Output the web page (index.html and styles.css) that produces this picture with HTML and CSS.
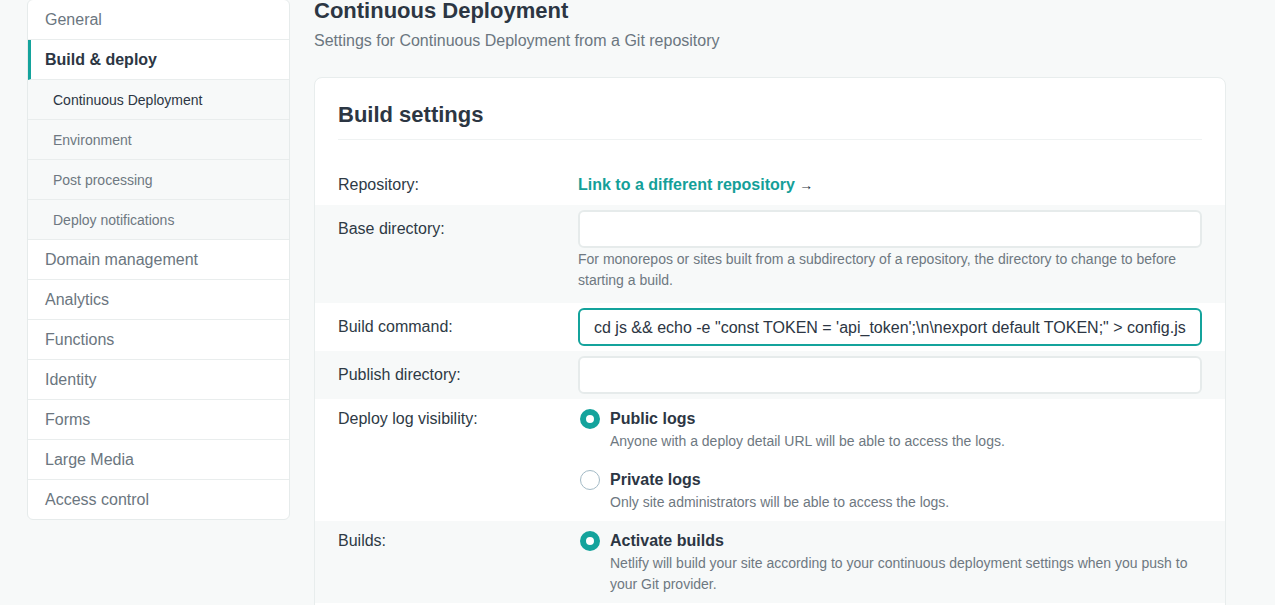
FILE: index.html
```html
<!DOCTYPE html>
<html lang="en">
<head>
<meta charset="utf-8">
<title>Build & deploy – Continuous Deployment</title>
<link rel="stylesheet" href="styles.css">
</head>
<body>
<div class="layout">
  <nav class="sidenav">
    <a class="nav-item">General</a>
    <a class="nav-item active">Build &amp; deploy</a>
    <a class="nav-item sub current">Continuous Deployment</a>
    <a class="nav-item sub">Environment</a>
    <a class="nav-item sub">Post processing</a>
    <a class="nav-item sub">Deploy notifications</a>
    <a class="nav-item">Domain management</a>
    <a class="nav-item">Analytics</a>
    <a class="nav-item">Functions</a>
    <a class="nav-item">Identity</a>
    <a class="nav-item">Forms</a>
    <a class="nav-item">Large Media</a>
    <a class="nav-item last">Access control</a>
  </nav>

  <main class="main">
    <h1 class="page-title">Continuous Deployment</h1>
    <p class="page-sub">Settings for Continuous Deployment from a Git repository</p>

    <section class="card">
      <h2 class="card-title">Build settings</h2>

      <div class="row row-repo">
        <div class="label">Repository:</div>
        <div class="value"><a class="link">Link to a different repository <span class="arrow">→</span></a></div>
      </div>

      <div class="row alt row-help">
        <div class="label">Base directory:</div>
        <div class="value">
          <div class="input"></div>
          <p class="help">For monorepos or sites built from a subdirectory of a repository, the directory to change to before starting a build.</p>
        </div>
      </div>

      <div class="row">
        <div class="label">Build command:</div>
        <div class="value">
          <div class="input focus">cd js &amp;&amp; echo -e "const TOKEN = 'api_token';\n\nexport default TOKEN;" &gt; config.js</div>
        </div>
      </div>

      <div class="row alt">
        <div class="label">Publish directory:</div>
        <div class="value"><div class="input"></div></div>
      </div>

      <div class="row radio-row">
        <div class="label label-radio">Deploy log visibility:</div>
        <div class="value">
          <div class="option">
            <span class="radio checked"></span>
            <div class="opt-body">
              <div class="opt-title">Public logs</div>
              <div class="opt-desc">Anyone with a deploy detail URL will be able to access the logs.</div>
            </div>
          </div>
          <div class="option">
            <span class="radio"></span>
            <div class="opt-body">
              <div class="opt-title">Private logs</div>
              <div class="opt-desc">Only site administrators will be able to access the logs.</div>
            </div>
          </div>
        </div>
      </div>

      <div class="row alt radio-row">
        <div class="label label-radio">Builds:</div>
        <div class="value">
          <div class="option">
            <span class="radio checked"></span>
            <div class="opt-body">
              <div class="opt-title">Activate builds</div>
              <div class="opt-desc">Netlify will build your site according to your continuous deployment settings when you push to your Git provider.</div>
            </div>
          </div>
        </div>
      </div>
    </section>
  </main>
</div>
</body>
</html>
```

FILE: styles.css
```css
* { box-sizing: border-box; }

html, body {
  margin: 0;
  padding: 0;
  background: #f7f9f9;
  font-family: "Liberation Sans", Arial, sans-serif;
  color: #2e3a45;
  overflow: hidden;
}

.layout {
  display: flex;
  align-items: flex-start;
  gap: 24px;
  padding-left: 27px;
}

/* Sidebar */
.sidenav {
  width: 263px;
  flex: 0 0 263px;
  margin-top: -1px;
  background: #fff;
  border: 1px solid #e6ebeb;
  border-radius: 6px;
  display: flex;
  flex-direction: column;
  overflow: hidden;
}

.nav-item {
  display: block;
  height: 40px;
  line-height: 39px;
  padding-left: 17px;
  font-size: 16px;
  color: #6b7680;
  border-bottom: 1px solid #e9eded;
  text-decoration: none;
}

.nav-item.last { border-bottom: none; height: 39px; }

.nav-item.active {
  font-weight: bold;
  color: #2c3643;
  border-left: 3px solid #14a39c;
  padding-left: 14px;
}

.nav-item.sub {
  background: #f7f9f9;
  font-size: 14px;
  line-height: 41px;
  padding-left: 25px;
  color: #6e7881;
}

.nav-item.sub.current { color: #2c3643; }

/* Main */
.main {
  width: 912px;
  flex: 0 0 912px;
  margin-top: -3px;
}

.page-title {
  margin: 0;
  font-size: 22px;
  line-height: 28px;
  font-weight: bold;
  color: #2c3643;
}

.page-sub {
  margin: 4px 0 0;
  font-size: 16px;
  line-height: 24px;
  color: #6b7680;
}

.card {
  margin-top: 24px;
  background: #fff;
  border: 1px solid #e8eded;
  border-radius: 8px;
  padding-top: 24px;
  min-height: 600px;
}

.card-title {
  margin: 0 23px;
  font-size: 22px;
  line-height: 26px;
  font-weight: bold;
  color: #2c3643;
  padding-bottom: 11px;
  border-bottom: 1px solid #eff2f2;
}

.row {
  display: grid;
  grid-template-columns: 240px 624px;
  padding: 5px 23px;
}

.row.alt { background: #f7f9f9; }

.row-repo { margin-top: 22px; padding: 4px 23px 2px; }

.row-help { padding-bottom: 12px; }

.label {
  font-size: 16px;
  line-height: 36px;
  padding-top: 1px;
  color: #2e3a45;
}

.value { min-width: 0; }

.link {
  display: inline-block;
  font-size: 16px;
  line-height: 36px;
  padding-top: 1px;
  font-weight: bold;
  color: #149f99;
  text-decoration: none;
}

.arrow {
  font-weight: normal;
  font-size: 14px;
  color: #2c3643;
}

.input {
  height: 38px;
  border: 2px solid #e6ebeb;
  border-radius: 6px;
  background: #fff;
  font-size: 16px;
  line-height: 35px;
  padding: 0 12px 0 14px;
  color: #2c3643;
  white-space: nowrap;
  overflow: hidden;
}

.input.focus { border-color: #14a39c; }

.help {
  margin: 1px 0 0;
  font-size: 14px;
  line-height: 21px;
  color: #6e7881;
}

/* Radios */
.radio-row { padding: 8px 23px 8px; }

.label-radio { line-height: 24px; padding-top: 0; }

.option {
  display: flex;
  align-items: flex-start;
  gap: 10px;
  padding-left: 2px;
}

.option + .option { margin-top: 16px; }

.radio {
  flex: 0 0 20px;
  width: 20px;
  height: 20px;
  margin-top: 2px;
  border-radius: 50%;
  border: 1.5px solid #a3bac6;
  background: #fff;
}

.radio.checked {
  border: 6px solid #14a39c;
}

.opt-title {
  font-size: 16px;
  line-height: 24px;
  font-weight: bold;
  color: #2c3643;
}

.opt-desc {
  font-size: 14px;
  line-height: 21px;
  color: #6e7881;
}
```
